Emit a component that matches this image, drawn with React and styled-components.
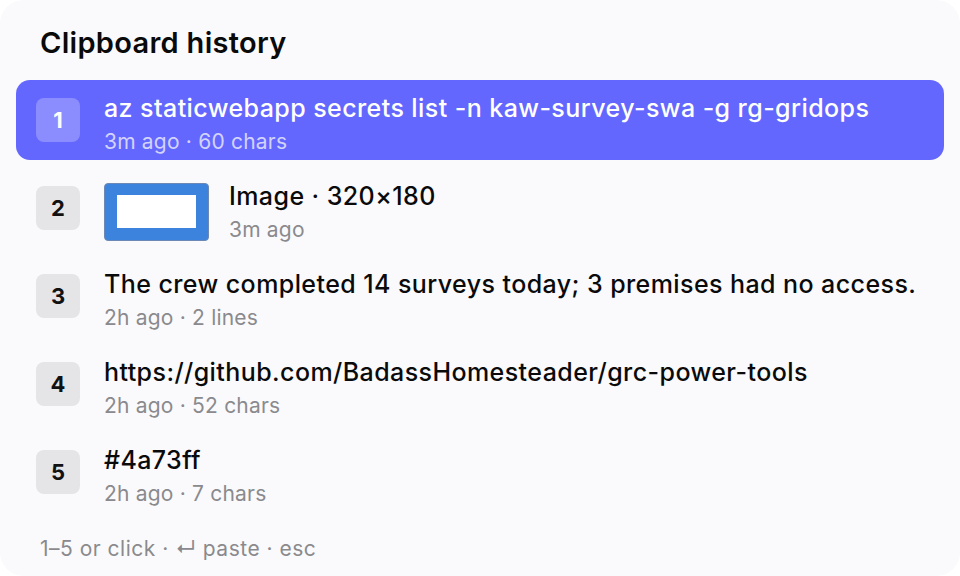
import React from 'react';
import styled, { createGlobalStyle } from 'styled-components';

const GlobalStyle = createGlobalStyle`
  html, body {
    margin: 0;
    padding: 0;
    background: #ffffff;
  }
  body {
    font-family: Inter, "Noto Sans", "Liberation Sans", sans-serif;
    -webkit-font-smoothing: antialiased;
  }
`;

const items = [
  { id: 1, title: 'az staticwebapp secrets list -n kaw-survey-swa -g rg-gridops', meta: '3m ago · 60 chars' },
  { id: 2, title: 'Image · 320×180', meta: '3m ago', image: true },
  { id: 3, title: 'The crew completed 14 surveys today; 3 premises had no access.', meta: '2h ago · 2 lines' },
  { id: 4, title: 'https://github.com/BadassHomesteader/grc-power-tools', meta: '2h ago · 52 chars' },
  { id: 5, title: '#4a73ff', meta: '2h ago · 7 chars' },
];

const App = () => {
  const selected = 1;

  return (
    <>
      <GlobalStyle />
      <Panel>
        <Title>Clipboard history</Title>
        <List>
          {items.map(item => {
            const active = item.id === selected;
            return (
              <Row key={item.id} active={active}>
                <Badge active={active}>{item.id}</Badge>
                {item.image && (
                  <Thumb>
                    <ThumbInner />
                  </Thumb>
                )}
                <Texts>
                  <RowTitle active={active}>{item.title}</RowTitle>
                  <RowMeta active={active}>{item.meta}</RowMeta>
                </Texts>
              </Row>
            );
          })}
        </List>
        <Footer>1–5 or click · ↵ paste · esc</Footer>
      </Panel>
    </>
  );
};

// Styles
const Panel = styled.div`
  width: 960px;
  height: 576px;
  box-sizing: border-box;
  background: #fafafc;
  border-radius: 24px;
  padding: 26px 16px 0;
  display: flex;
  flex-direction: column;
`;

const Title = styled.h1`
  margin: 0 0 0 24px;
  font-size: 29px;
  line-height: 34px;
  font-weight: 600;
  letter-spacing: 0.3px;
  color: #0a0a0a;
`;

const List = styled.div`
  margin-top: 20px;
  display: flex;
  flex-direction: column;
  gap: 8px;
`;

const Row = styled.div`
  height: 80px;
  box-sizing: border-box;
  display: flex;
  align-items: center;
  gap: 24px;
  padding: 0 20px;
  border-radius: 14px;
  background: ${props => props.active ? '#6467fe' : 'transparent'};
`;

const Badge = styled.div`
  flex: 0 0 44px;
  width: 44px;
  height: 44px;
  border-radius: 8px;
  display: flex;
  align-items: center;
  justify-content: center;
  font-size: 22px;
  font-weight: 700;
  color: ${props => props.active ? '#ffffff' : '#111111'};
  background: ${props => props.active ? 'rgba(255, 255, 255, 0.25)' : '#e5e5e8'};
`;

const Thumb = styled.div`
  flex: 0 0 auto;
  width: 105px;
  height: 58px;
  box-sizing: border-box;
  margin: 7px -4px 0 0;
  border: 1px solid #6d88b4;
  border-radius: 4px;
  background: #3c83dd;
  display: flex;
  align-items: center;
  justify-content: center;
`;

const ThumbInner = styled.div`
  width: 79px;
  height: 33px;
  background: #ffffff;
`;

const Texts = styled.div`
  align-self: flex-start;
  display: flex;
  flex-direction: column;
  min-width: 0;
  padding-top: 13px;
`;

const RowTitle = styled.div`
  font-size: 25px;
  line-height: 30px;
  font-weight: 500;
  letter-spacing: 0.42px;
  color: ${props => props.active ? '#ffffff' : '#0a0a0a'};
  white-space: nowrap;
  overflow: hidden;
  text-overflow: ellipsis;
`;

const RowMeta = styled.div`
  margin-top: 3px;
  font-size: 21px;
  line-height: 32px;
  font-weight: 400;
  letter-spacing: 0.2px;
  color: ${props => props.active ? 'rgba(255, 255, 255, 0.72)' : '#8a8a8e'};
`;

const Footer = styled.div`
  margin: auto 0 0 24px;
  padding-bottom: 14px;
  font-size: 21px;
  line-height: 26px;
  letter-spacing: 0.5px;
  color: #8a8a8e;
`;

export default App;
